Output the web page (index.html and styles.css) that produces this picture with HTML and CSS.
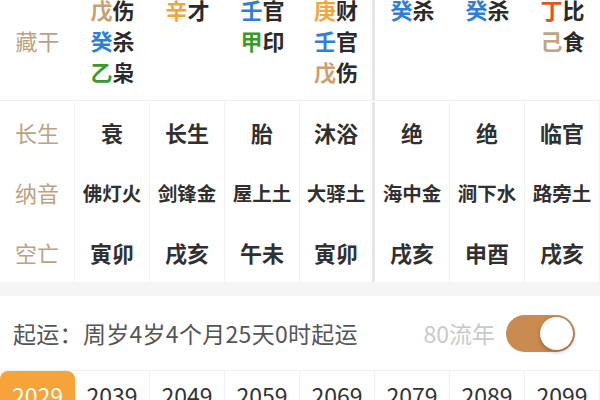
FILE: index.html
```html
<!DOCTYPE html>
<html lang="zh-CN">
<head>
<meta charset="utf-8">
<link rel="stylesheet" href="styles.css">
</head>
<body>
<div class="page">
  <div class="stems">
    <div class="label stem-label">藏干</div>
    <div class="stem-cell">
      <span><b class="c-tan">戊</b>伤</span>
      <span><b class="c-blue">癸</b>杀</span>
      <span><b class="c-green">乙</b>枭</span>
    </div>
    <div class="stem-cell">
      <span><b class="c-orange">辛</b>才</span>
    </div>
    <div class="stem-cell">
      <span><b class="c-blue">壬</b>官</span>
      <span><b class="c-green">甲</b>印</span>
    </div>
    <div class="stem-cell divider">
      <span><b class="c-orange">庚</b>财</span>
      <span><b class="c-blue">壬</b>官</span>
      <span><b class="c-tan">戊</b>伤</span>
    </div>
    <div class="stem-cell">
      <span><b class="c-blue">癸</b>杀</span>
    </div>
    <div class="stem-cell">
      <span><b class="c-blue">癸</b>杀</span>
    </div>
    <div class="stem-cell">
      <span><b class="c-red">丁</b>比</span>
      <span><b class="c-tan2">己</b>食</span>
    </div>
  </div>

  <div class="grid">
    <div class="label cell">长生</div>
    <div class="cell val">衰</div>
    <div class="cell val">长生</div>
    <div class="cell val">胎</div>
    <div class="cell val divider">沐浴</div>
    <div class="cell val">绝</div>
    <div class="cell val">绝</div>
    <div class="cell val">临官</div>

    <div class="label cell">纳音</div>
    <div class="cell val small">佛灯火</div>
    <div class="cell val small">剑锋金</div>
    <div class="cell val small">屋上土</div>
    <div class="cell val small divider">大驿土</div>
    <div class="cell val small">海中金</div>
    <div class="cell val small">涧下水</div>
    <div class="cell val small">路旁土</div>

    <div class="label cell">空亡</div>
    <div class="cell val">寅卯</div>
    <div class="cell val">戌亥</div>
    <div class="cell val">午未</div>
    <div class="cell val divider">寅卯</div>
    <div class="cell val">戌亥</div>
    <div class="cell val">申酉</div>
    <div class="cell val">戌亥</div>
  </div>

  <div class="band"></div>

  <div class="qiyun">
    <div class="qiyun-text">起运：周岁4岁4个月25天0时起运</div>
    <div class="qiyun-right">
      <span class="liunian">80流年</span>
      <span class="toggle"><span class="knob"></span></span>
    </div>
  </div>

  <div class="years">
    <div class="year active">2029</div>
    <div class="year">2039</div>
    <div class="year">2049</div>
    <div class="year">2059</div>
    <div class="year">2069</div>
    <div class="year">2079</div>
    <div class="year">2089</div>
    <div class="year">2099</div>
  </div>
</div>
</body>
</html>
```

FILE: styles.css
```css
* { box-sizing: border-box; }

html, body {
  margin: 0;
  padding: 0;
  background: #ffffff;
  width: 600px;
  height: 400px;
  overflow: hidden;
}

body {
  font-family: "Noto Sans CJK SC", "Noto Sans", sans-serif;
  color: #333333;
}

.page {
  width: 600px;
}

.label {
  color: #bba283;
  font-size: 22px;
  font-weight: 400;
  text-align: center;
}

/* hidden stems row */
.stems {
  display: grid;
  grid-template-columns: repeat(8, 75px);
  margin-top: -6px;
  height: 107px;
  border-bottom: 1px solid #f0f0f0;
}

.stem-label {
  padding-top: 31px;
  line-height: 31px;
}

.stem-cell {
  display: flex;
  flex-direction: column;
  align-items: center;
  font-size: 22px;
  font-weight: 700;
  line-height: 31px;
  color: #2a2a2a;
}

.stem-cell b { font-weight: 700; }

.c-tan { color: #c9a070; }
.c-tan2 { color: #c2a47e; }
.c-blue { color: #2e80d6; }
.c-green { color: #3a9a2e; }
.c-orange { color: #f2a53c; }
.c-red { color: #e0561d; }

.divider {
  border-right: 3px solid #e6e6e6;
}

/* main grid */
.grid {
  display: grid;
  grid-template-columns: repeat(8, 75px);
  grid-auto-rows: 60px;
  padding-top: 1px;
}

.cell {
  display: flex;
  align-items: center;
  justify-content: center;
  border-right: 1px solid #f2f2f2;
}

.val {
  font-size: 22px;
  font-weight: 700;
  color: #303030;
}

.val.small {
  font-size: 19.5px;
}

.val.divider {
  border-right: 3px solid #e6e6e6;
}

.band {
  height: 14px;
  background: #f5f5f5;
}

/* qiyun bar */
.qiyun {
  height: 75px;
  display: flex;
  align-items: center;
  justify-content: space-between;
  padding: 0 25px 0 13px;
  border-bottom: 1px solid #f0f0f0;
}

.qiyun-text {
  font-size: 23px;
  letter-spacing: 0.3px;
  color: #555555;
}

.qiyun-right {
  display: flex;
  align-items: center;
  gap: 11px;
}

.liunian {
  font-size: 23px;
  color: #c9c9c9;
}

.toggle {
  position: relative;
  width: 69px;
  height: 37px;
  border-radius: 19px;
  background: #c98b4f;
}

.knob {
  position: absolute;
  right: 2px;
  top: 2px;
  width: 33px;
  height: 33px;
  border-radius: 50%;
  background: #ffffff;
  box-shadow: 0 2px 4px rgba(0, 0, 0, 0.25);
}

/* years */
.years {
  display: grid;
  grid-template-columns: repeat(8, 75px);
  height: 60px;
}

.year {
  font-size: 23px;
  color: #333333;
  text-align: center;
  padding-top: 9px;
  line-height: 30px;
  border-right: 1px solid #f2f2f2;
}

.year.active {
  background: #f6a33a;
  color: #ffffff;
  border-radius: 8px 8px 0 0;
  border-right: none;
}
```
